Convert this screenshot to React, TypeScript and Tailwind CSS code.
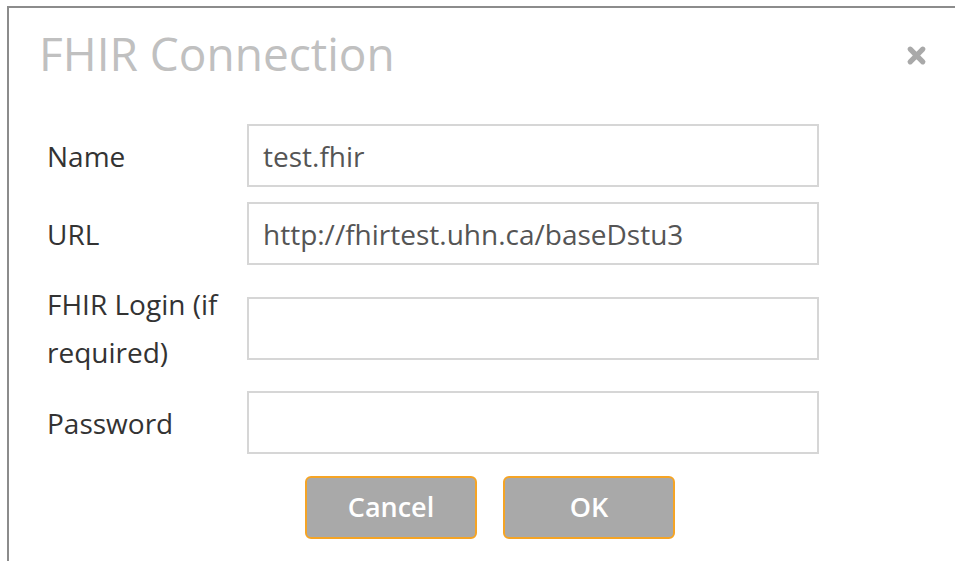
import React from "react";

const fields = [
  { label: "Name", value: "test.fhir" },
  { label: "URL", value: "http://fhirtest.uhn.ca/baseDstu3" },
  { label: "FHIR Login (if required)", value: "" },
  { label: "Password", value: "" },
];

function CloseIcon() {
  return (
    <svg width="21" height="21" viewBox="0 0 20 20" aria-hidden="true">
      <path d="M4 4 L16 16 M16 4 L4 16" stroke="#a9a9a9" strokeWidth="5" strokeLinecap="round" />
    </svg>
  );
}

export default function App() {
  return (
    <div
      className="w-[955px] h-[561px] bg-white pt-[6px] pl-[7px] overflow-hidden"
      style={{ fontFamily: '"Open Sans", "Noto Sans", sans-serif' }}
    >
      <div className="h-full border-t-2 border-l-2 border-[#8c8c8c] bg-white">
        <div className="flex items-center justify-between pl-[30px] pr-[28px] pt-[14px] h-[96px]">
          <h1 className="text-[46px] font-normal leading-none text-[#c0c0c0] mt-[-21px]">FHIR Connection</h1>
          <button className="mt-[-16px] flex items-center justify-center">
            <CloseIcon />
          </button>
        </div>
        <form className="flex flex-col gap-[15px] pl-[38px] pt-[20px]">
          {fields.map((f) => (
            <div key={f.label} className="flex items-center">
              <label className="w-[200px] pr-[20px] text-[28px] leading-[48px] text-[#333]">{f.label}</label>
              <input
                readOnly
                value={f.value}
                className="w-[572px] h-[63px] border-2 border-[#d6d6d6] px-[14px] text-[28px] text-[#555] outline-none bg-white"
              />
            </div>
          ))}
          <div className="flex gap-[26px] pl-[258px] pt-[7px]">
            <button
              type="button"
              className="w-[172px] h-[63px] rounded-[6px] border-2 border-[#f5a425] bg-[#a9a9a9] text-white text-[27px] font-semibold"
            >
              Cancel
            </button>
            <button
              type="button"
              className="w-[172px] h-[63px] rounded-[6px] border-2 border-[#f5a425] bg-[#a9a9a9] text-white text-[27px] font-semibold"
            >
              OK
            </button>
          </div>
        </form>
      </div>
    </div>
  );
}
